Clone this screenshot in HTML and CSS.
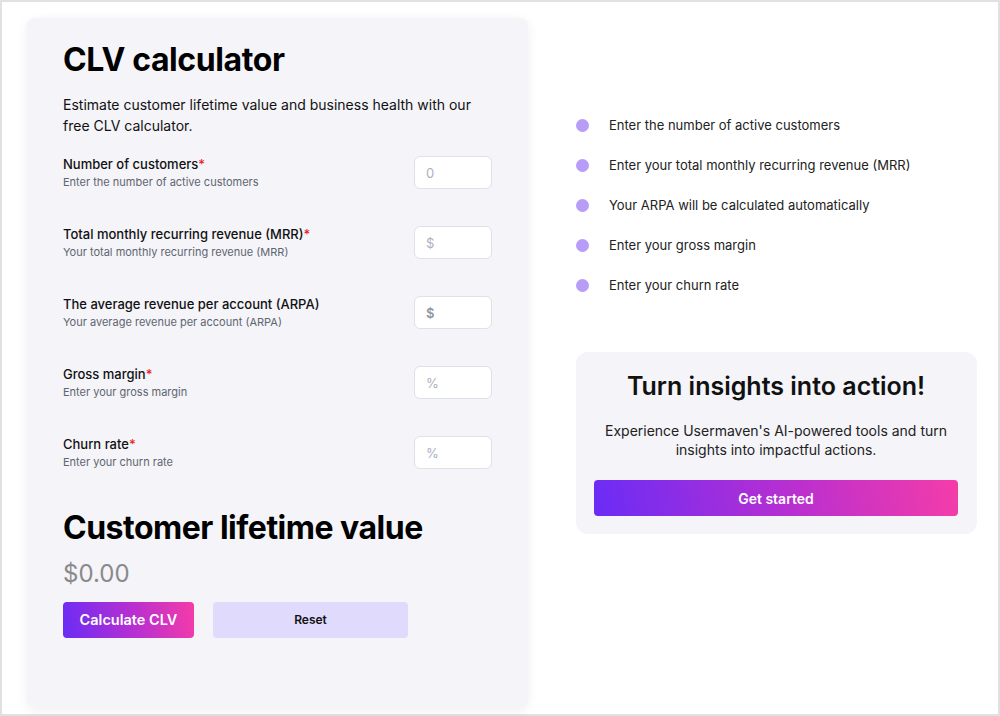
FILE: index.html
```html
<!DOCTYPE html>
<html lang="en">
<head>
    <meta charset="UTF-8">
    <meta name="viewport" content="width=device-width, initial-scale=1.0">
    <title>CLV calculator</title>
    <link rel="stylesheet" href="styles.css">
</head>
<body>
<div class="page">
    <!-- Calculator card -->
    <div class="calc">
        <h1>CLV calculator</h1>
        <p class="intro">Estimate customer lifetime value and business health with our free CLV calculator.</p>

        <div class="field">
            <div class="field-text">
                <div class="field-label">Number of customers<span class="req">*</span></div>
                <div class="field-hint">Enter the number of active customers</div>
            </div>
            <input type="text" class="field-input" placeholder="0">
        </div>

        <div class="field">
            <div class="field-text">
                <div class="field-label">Total monthly recurring revenue (MRR)<span class="req">*</span></div>
                <div class="field-hint">Your total monthly recurring revenue (MRR)</div>
            </div>
            <input type="text" class="field-input" placeholder="$">
        </div>

        <div class="field">
            <div class="field-text">
                <div class="field-label">The average revenue per account (ARPA)</div>
                <div class="field-hint">Your average revenue per account (ARPA)</div>
            </div>
            <input type="text" class="field-input field-input-strong" placeholder="$">
        </div>

        <div class="field">
            <div class="field-text">
                <div class="field-label">Gross margin<span class="req">*</span></div>
                <div class="field-hint">Enter your gross margin</div>
            </div>
            <input type="text" class="field-input" placeholder="%">
        </div>

        <div class="field">
            <div class="field-text">
                <div class="field-label">Churn rate<span class="req">*</span></div>
                <div class="field-hint">Enter your churn rate</div>
            </div>
            <input type="text" class="field-input" placeholder="%">
        </div>

        <h2>Customer lifetime value</h2>
        <div class="result">$0.00</div>

        <div class="actions">
            <button class="calc-button">Calculate CLV</button>
            <button class="reset-button">Reset</button>
        </div>
    </div>

    <!-- Steps + call to action -->
    <div class="side">
        <ul class="steps">
            <li><span class="dot"></span>Enter the number of active customers</li>
            <li><span class="dot"></span>Enter your total monthly recurring revenue (MRR)</li>
            <li><span class="dot"></span>Your ARPA will be calculated automatically</li>
            <li><span class="dot"></span>Enter your gross margin</li>
            <li><span class="dot"></span>Enter your churn rate</li>
        </ul>

        <div class="cta">
            <h3>Turn insights into action!</h3>
            <p>Experience Usermaven's AI-powered tools and turn insights into impactful actions.</p>
            <button class="cta-button">Get started</button>
        </div>
    </div>
</div>
</body>
</html>
```

FILE: styles.css
```css
body {
    font-family: Inter, 'Noto Sans', sans-serif;
    margin: 0;
    color: #111;
    background-color: #fff;
}

.page {
    height: 716px;
    box-sizing: border-box;
    border: 2px solid #e1e1e1;
    padding: 16px 0 0 25px;
    display: flex;
    align-items: flex-start;
    gap: 48px;
}

.calc {
    width: 501px;
    box-sizing: border-box;
    padding: 23px 36px 69px;
    background-color: #f4f4f9;
    border-radius: 8px;
    box-shadow: 0 3px 12px rgba(0, 0, 0, 0.07);
}

h1 {
    margin: 0;
    font-size: 32px;
    line-height: 1.2;
    font-weight: 700;
    letter-spacing: -0.4px;
    color: #000;
}

.intro {
    margin: 15px 0 18px;
    font-size: 14px;
    line-height: 21px;
    color: #111;
}

.field {
    display: flex;
    align-items: center;
    justify-content: space-between;
    margin-bottom: 33px;
}

.field-label {
    font-size: 13px;
    line-height: 20px;
    font-weight: 500;
    color: #111;
}

.req {
    color: #ee1c25;
}

.field-hint {
    font-size: 11px;
    line-height: 17px;
    color: #5f6570;
}

.field-input {
    width: 78px;
    height: 33px;
    box-sizing: border-box;
    padding: 0 11px;
    border: 1px solid #dde1ea;
    border-radius: 6px;
    background-color: #fff;
    font-family: inherit;
    font-size: 13px;
}

.field-input::placeholder {
    color: #aab1be;
}

.field-input-strong::placeholder {
    color: #8e97a6;
    font-weight: 600;
}

h2 {
    margin: 38px 0 8px;
    font-size: 32px;
    line-height: 1.2;
    font-weight: 700;
    letter-spacing: -0.5px;
    color: #000;
}

.result {
    font-size: 24px;
    line-height: 36px;
    color: #8a8a8a;
    margin-bottom: 10px;
}

.actions {
    display: flex;
    gap: 19px;
}

.calc-button,
.cta-button {
    height: 36px;
    border: none;
    border-radius: 4px;
    background: linear-gradient(80deg, #6a2cf6 0%, #b92fd0 55%, #f53ca8 100%);
    color: #fff;
    font-family: inherit;
    font-weight: 600;
    cursor: pointer;
}

.calc-button {
    width: 131px;
    font-size: 14.5px;
}

.reset-button {
    width: 195px;
    height: 36px;
    border: none;
    border-radius: 4px;
    background-color: #e0dafd;
    color: #111;
    font-family: inherit;
    font-size: 12px;
    font-weight: 600;
    cursor: pointer;
}

.side {
    width: 401px;
    margin-top: 87px;
}

.steps {
    list-style: none;
    margin: 0 0 47px;
    padding: 0;
}

.steps li {
    height: 40px;
    display: flex;
    align-items: center;
    gap: 20px;
    font-size: 13px;
    color: #222;
}

.dot {
    width: 13px;
    height: 13px;
    border-radius: 50%;
    background-color: #b89df8;
    flex-shrink: 0;
}

.cta {
    background-color: #f4f4f9;
    border-radius: 12px;
    padding: 18px 19px 18px 18px;
    text-align: center;
}

.cta h3 {
    margin: 0;
    font-size: 25px;
    line-height: 32px;
    font-weight: 600;
    color: #111;
}

.cta p {
    margin: 19px 0 21px;
    font-size: 14px;
    line-height: 19px;
    color: #222;
}

.cta-button {
    width: 100%;
    font-size: 14px;
}
```
